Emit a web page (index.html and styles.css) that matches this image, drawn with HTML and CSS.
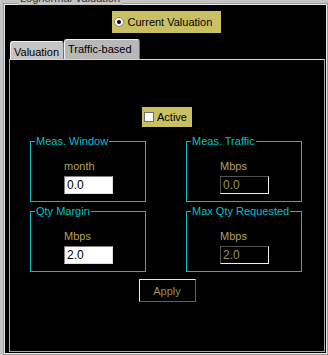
FILE: index.html
```html
<!DOCTYPE html>
<html>
<head>
  <title>Lognormal Valuation</title>
  <link rel="stylesheet" href="styles.css">
</head>
<body>
  <div class="frame">
    <div class="frame-title">Lognormal Valuation</div>

    <div class="mode-row">
      <label class="radio-label"><span class="radio"></span>Current Valuation</label>
    </div>

    <div class="tabs">
      <div class="tab">Valuation</div>
      <div class="tab tab-active">Traffic-based</div>
    </div>

    <div class="tab-panel">
      <div class="active-row">
        <label class="check-label"><span class="check"></span>Active</label>
      </div>

      <div class="groups">
        <div class="group">
          <span class="group-title">Meas. Window</span>
          <div class="unit">month</div>
          <input type="text" class="field" value="0.0">
        </div>
        <div class="group">
          <span class="group-title">Meas. Traffic</span>
          <div class="unit">Mbps</div>
          <input type="text" class="field field-off" value="0.0" disabled>
        </div>
        <div class="group">
          <span class="group-title">Qty Margin</span>
          <div class="unit">Mbps</div>
          <input type="text" class="field" value="2.0">
        </div>
        <div class="group">
          <span class="group-title">Max Qty Requested</span>
          <div class="unit">Mbps</div>
          <input type="text" class="field field-off" value="2.0" disabled>
        </div>
      </div>

      <div class="apply-row">
        <button class="apply" disabled>Apply</button>
      </div>
    </div>
  </div>
</body>
</html>
```

FILE: styles.css
```css
* { box-sizing: border-box; margin: 0; padding: 0; }
body {
  font-family: 'Liberation Sans', Arial, sans-serif;
  font-size: 11px;
  background: #c4c4c4;
  width: 328px;
  height: 355px;
  overflow: hidden;
  padding: 3px 0 0 3px;
}

.frame {
  position: relative;
  width: 325px;
  height: 352px;
  background: #000;
  border: 1px solid #9a9a9a;
  box-shadow: inset 0 0 0 1px #eaeaea;
  padding: 2px 2px 2px 2px;
}

.frame-title {
  position: absolute;
  top: -12px;
  left: 14px;
  color: #333;
  background: #c4c4c4;
  padding: 0 2px;
  line-height: 13px;
}

.mode-row {
  display: flex;
  justify-content: center;
  margin-top: 5px;
  padding-left: 1px;
}

.radio-label, .check-label {
  display: flex;
  align-items: center;
  background: #c8c062;
  color: #000;
  height: 22px;
}

.radio-label {
  width: 109px;
  padding-left: 2px;
}

.radio {
  width: 10px;
  height: 10px;
  border-radius: 50%;
  background: #fff;
  border: 1px solid #808080;
  margin-right: 4px;
  position: relative;
}

.radio::after {
  content: '';
  position: absolute;
  left: 2px;
  top: 2px;
  width: 4px;
  height: 4px;
  border-radius: 50%;
  background: #000;
}

.tabs {
  display: flex;
  align-items: flex-end;
  height: 20px;
  margin-top: 6px;
  padding-left: 4px;
}

.tab {
  height: 18px;
  width: 54px;
  background: #c4c4c4;
  color: #000;
  border-top: 1px solid #f0f0f0;
  border-left: 1px solid #f0f0f0;
  border-right: 1px solid #707070;
  border-radius: 3px 3px 0 0;
  padding: 4px 0 0 3px;
  line-height: 12px;
}

.tab-active {
  height: 20px;
  width: 76px;
  background: #b8b8b8;
  padding-top: 3px;
}

.tab-panel {
  margin-left: 3px;
  width: 316px;
  height: 293px;
  border: 1px solid #a8a8a8;
  border-top-color: #d8d8d8;
}

.active-row {
  display: flex;
  justify-content: center;
  margin-top: 47px;
}

.check-label {
  width: 50px;
  height: 20px;
  padding-left: 2px;
}

.check {
  width: 10px;
  height: 10px;
  background: #fff;
  border: 1px solid #707070;
  margin-right: 3px;
}

.groups {
  display: grid;
  grid-template-columns: 116px 116px;
  grid-auto-rows: 61px;
  column-gap: 40px;
  row-gap: 9px;
  justify-content: center;
  margin-top: 14px;
  padding-right: 2px;
}

.group {
  position: relative;
  border: 1px solid #00c0c8;
  display: flex;
  flex-direction: column;
  justify-content: flex-end;
  padding: 0 0 7px 33px;
}

.group-title {
  position: absolute;
  top: -7px;
  left: 4px;
  background: #000;
  color: #00c0c8;
  padding: 0 1px;
  line-height: 13px;
}

.unit {
  color: #b0a35a;
  line-height: 13px;
  margin-bottom: 3px;
}

.field {
  width: 49px;
  height: 18px;
  font-family: inherit;
  font-size: 12px;
  color: #000;
  background: #fff;
  border: 1px solid #808080;
  border-right-color: #e0e0e0;
  border-bottom-color: #e0e0e0;
  padding: 0 2px;
  outline: none;
}

.field-off {
  background: #000;
  color: #9a9050;
  border-color: #505050 #f0f0f0 #f0f0f0 #505050;
}

.apply-row {
  display: flex;
  justify-content: center;
  margin-top: 7px;
}

.apply {
  width: 57px;
  height: 23px;
  font-family: inherit;
  font-size: 11px;
  background: #000;
  color: #9a9050;
  border: 1px solid #e8e8e8;
  border-right-color: #606060;
  border-bottom-color: #606060;
}
```
